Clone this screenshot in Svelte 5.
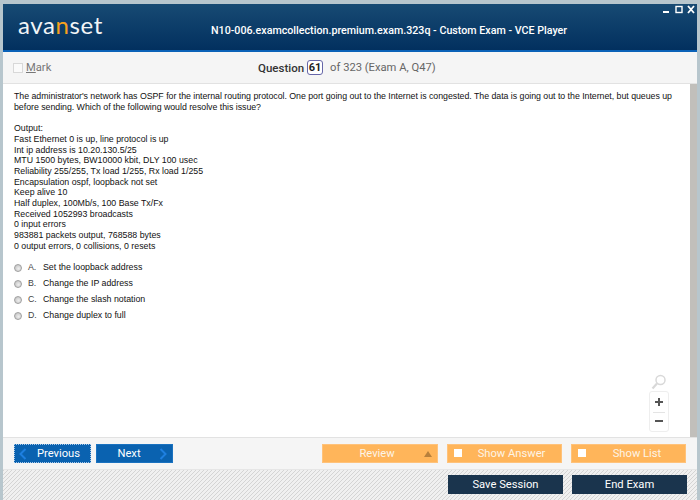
<script>
  const questionLines = [
    "The administrator's network has OSPF for the internal routing protocol. One port going out to the Internet is congested. The data is going out to the Internet, but queues up before sending. Which of the following would resolve this issue?",
  ];
  const outputLines = [
    'Output:',
    'Fast Ethernet 0 is up, line protocol is up',
    'Int ip address is 10.20.130.5/25',
    'MTU 1500 bytes, BW10000 kbit, DLY 100 usec',
    'Reliability 255/255, Tx load 1/255, Rx load 1/255',
    'Encapsulation ospf, loopback not set',
    'Keep alive 10',
    'Half duplex, 100Mb/s, 100 Base Tx/Fx',
    'Received 1052993 broadcasts',
    '0 input errors',
    '983881 packets output, 768588 bytes',
    '0 output errors, 0 collisions, 0 resets',
  ];
  const answers = [
    ['A.', 'Set the loopback address'],
    ['B.', 'Change the IP address'],
    ['C.', 'Change the slash notation'],
    ['D.', 'Change duplex to full'],
  ];
</script>

<div class="window">
  <header class="titlebar">
    <div class="logo">ava<span>n</span>set</div>
    <div class="title">N10-006.examcollection.premium.exam.323q - Custom Exam - VCE Player</div>
    <div class="controls">
      <svg width="34" height="10" viewBox="0 0 34 10">
        <rect x="1" y="7" width="6" height="2" fill="#fff" />
        <rect x="14" y="2.5" width="6" height="6" fill="none" stroke="#fff" stroke-width="1.4" />
        <path d="M26 2l6 7M32 2l-6 7" stroke="#fff" stroke-width="1.8" />
      </svg>
    </div>
  </header>

  <div class="subbar">
    <label class="mark"><span class="markbox"></span><span><u>M</u>ark</span></label>
    <div class="qinfo">
      <strong>Question</strong>
      <span class="qnum">61</span>
      <span class="of">of 323 (Exam A, Q47)</span>
    </div>
  </div>

  <main class="content">
    <div class="text">
      {#each questionLines as line}<p class="question">{line}</p>{/each}
      <p class="output">
        {#each outputLines as line}{line}<br />{/each}
      </p>
      <ul>
        {#each answers as [letter, label]}
          <li><span class="radio"></span><span class="letter">{letter}</span><span>{label}</span></li>
        {/each}
      </ul>
    </div>
    <div class="zoom">
      <svg width="16" height="16" viewBox="0 0 16 16">
        <circle cx="9.5" cy="6" r="4.5" fill="#fff" stroke="#d8d8d8" stroke-width="1.5" />
        <path d="M6 9.5L1.5 14.5" stroke="#d8d8d8" stroke-width="2.2" />
      </svg>
      <div class="zoombox">
        <span class="plus"></span>
        <hr />
        <span class="minus"></span>
      </div>
    </div>
    <div class="scrollbar"></div>
  </main>

  <nav class="actions">
    <button class="blue focused">
      <svg width="8" height="14" viewBox="0 0 8 14"><path d="M6.5 2L1.5 7l5 5" fill="none" stroke="#1e7fe0" stroke-width="2" /></svg>
      <span>Previous</span>
    </button>
    <button class="blue next">
      <span>Next</span>
      <svg width="8" height="14" viewBox="0 0 8 14"><path d="M1.5 2l5 5-5 5" fill="none" stroke="#1e7fe0" stroke-width="2" /></svg>
    </button>
    <button class="orange review"><span>Review</span><i class="arrow"></i></button>
    <button class="orange check answer"><i class="box"></i><span>Show Answer</span></button>
    <button class="orange check list"><i class="box"></i><span>Show List</span></button>
  </nav>

  <footer class="session">
    <button class="dark">Save Session</button>
    <button class="dark">End Exam</button>
  </footer>
</div>

<style>
  :global(body) {
    margin: 0;
  }
  .window {
    box-sizing: border-box;
    width: 700px;
    height: 500px;
    display: flex;
    flex-direction: column;
    padding: 4px 3px 0 3px;
    background: #b7c6cd;
    overflow: hidden;
    font-family: Roboto, 'Noto Sans', sans-serif;
  }
  .titlebar {
    position: relative;
    flex: 0 0 48px;
    box-sizing: border-box;
    display: flex;
    align-items: center;
    background: linear-gradient(#174a73, #02305f);
    border-bottom: 2px solid #0b62b8;
    color: #fff;
  }
  .logo {
    width: 208px;
    padding-left: 15px;
    box-sizing: border-box;
    font-family: 'Lato', sans-serif;
    font-size: 24px;
    letter-spacing: 0.6px;
    color: #f2f5f7;
    margin-top: -5px;
  }
  .logo span {
    color: #f5a11d;
  }
  .title {
    font-size: 10.7px;
    font-weight: 500;
    white-space: nowrap;
    margin-top: 7px;
  }
  .controls {
    position: absolute;
    right: 1px;
    top: 0;
  }
  .controls svg {
    display: block;
  }
  .subbar {
    flex: 0 0 32px;
    box-sizing: border-box;
    display: flex;
    align-items: center;
    background: #f5f5f5;
    border-bottom: 1px solid #e2e2e2;
    color: #555;
    font-size: 11.2px;
  }
  .mark {
    width: 255px;
    box-sizing: border-box;
    padding-left: 10px;
    display: flex;
    align-items: center;
    gap: 3px;
    color: #777;
  }
  .markbox {
    width: 8px;
    height: 8px;
    border: 1px solid #d8d8d8;
    background: #fafafa;
  }
  .qinfo {
    display: flex;
    align-items: center;
    gap: 3px;
  }
  .qinfo strong {
    font-weight: 500;
    font-size: 11.5px;
    color: #333;
  }
  .qnum {
    width: 14px;
    height: 13px;
    border: 1px solid #6666a8;
    border-radius: 3px;
    background: #fff;
    color: #222;
    font-weight: 700;
    font-size: 11px;
    line-height: 13px;
    text-align: center;
  }
  .of {
    margin-left: 4px;
    color: #666;
  }
  .content {
    position: relative;
    flex: 1;
    min-height: 0;
    background: #fff;
    border-bottom: 1px solid #e2e2e2;
    font-family: 'Liberation Sans', Arial, sans-serif;
    font-size: 8.8px;
    line-height: 10.7px;
    color: #111;
    display: flex;
  }
  .text {
    flex: 1;
    padding: 7px 10px 0 11px;
  }
  .text p {
    margin: 0 0 10.7px;
  }
  .text .question {
    letter-spacing: -0.03px;
  }
  .text .output {
    margin-bottom: 10px;
  }
  ul {
    list-style: none;
    margin: 0;
    padding: 0;
    display: grid;
    gap: 4px;
  }
  li {
    display: flex;
    align-items: center;
    height: 12px;
  }
  .radio {
    box-sizing: border-box;
    width: 8px;
    height: 8px;
    margin-right: 6px;
    border-radius: 50%;
    border: 1px solid #a0a0a0;
    background: radial-gradient(circle at 60% 60%, #eeeeee, #bcbcbc);
  }
  .letter {
    width: 15px;
    color: #444;
  }
  .zoom {
    position: absolute;
    right: 27px;
    bottom: 5px;
    width: 22px;
    display: flex;
    flex-direction: column;
    align-items: center;
    gap: 1px;
  }
  .zoombox {
    box-sizing: border-box;
    width: 20px;
    height: 41px;
    border: 1px solid #eeeeee;
    border-radius: 3px;
    display: flex;
    flex-direction: column;
    align-items: center;
  }
  .zoombox hr {
    width: 12px;
    border: 0;
    border-top: 1px solid #e4e4e4;
    margin: 9px 0 0;
  }
  .plus,
  .minus {
    display: block;
    position: relative;
    width: 8px;
    height: 2px;
    background: #555;
  }
  .plus {
    margin-top: 9px;
  }
  .plus::after {
    content: '';
    position: absolute;
    left: 3px;
    top: -3px;
    width: 2px;
    height: 8px;
    background: #555;
  }
  .minus {
    margin-top: 7px;
  }
  .scrollbar {
    width: 7px;
    background: #c1bfbb;
  }
  .actions {
    flex: 0 0 32px;
    box-sizing: border-box;
    padding: 6px 0 6px 11px;
    display: flex;
    background: #f5f5f5;
    border-bottom: 1px solid #e6e6e6;
  }
  button {
    box-sizing: border-box;
    height: 19px;
    padding: 0;
    border: 0;
    font-family: Roboto, 'Noto Sans', sans-serif;
    font-size: 11.2px;
    color: #fff;
    display: flex;
    align-items: center;
    position: relative;
  }
  .blue {
    width: 77px;
    background: #0a62b0;
    border: 1px solid #1a72c0;
    justify-content: center;
    padding: 0 6px;
  }
  .blue svg {
    position: absolute;
    top: 2px;
  }
  .focused {
    border: 1px dotted #a8c8e8;
    margin-right: 5px;
    padding-left: 18px;
  }
  .focused svg {
    left: 4px;
  }
  .next {
    padding-right: 17px;
  }
  .next svg {
    right: 5px;
  }
  .orange {
    background: #ffb55a;
    color: #fdf4e6;
    border: 1px solid #ffc27a;
    justify-content: center;
  }
  .review {
    width: 116px;
    margin-left: 149px;
    padding-right: 6px;
  }
  .arrow {
    position: absolute;
    right: 5px;
    top: 6px;
    width: 0;
    height: 0;
    border-left: 4px solid transparent;
    border-right: 4px solid transparent;
    border-bottom: 6px solid #b8803c;
  }
  .check {
    width: 115px;
  }
  .answer {
    margin-left: 9px;
    padding-left: 14px;
  }
  .list {
    margin-left: 9px;
    padding-left: 17px;
  }
  .box {
    position: absolute;
    left: 6px;
    top: 4px;
    width: 8px;
    height: 8px;
    background: #fff;
  }
  .session {
    flex: 0 0 30px;
    box-sizing: border-box;
    display: flex;
    justify-content: flex-end;
    gap: 9px;
    padding: 5px 10px 0 0;
    background: repeating-linear-gradient(135deg, #d4d4d4 0 1px, #f0f0f0 1px 2.83px);
  }
  .dark {
    width: 115px;
    height: 19px;
    justify-content: center;
    background: #1a344d;
  }
</style>
